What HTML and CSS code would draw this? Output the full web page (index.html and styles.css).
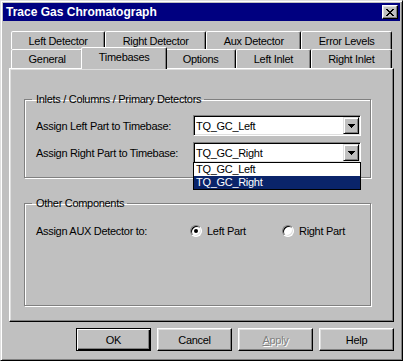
FILE: index.html
```html
<!DOCTYPE html>
<html>
<head>
<meta charset="utf-8">
<link rel="stylesheet" href="styles.css">
</head>
<body>
<div class="window">
  <div class="titlebar">
    <span class="title">Trace Gas Chromatograph</span>
    <span class="close"><svg width="8" height="7" viewBox="0 0 8 7" shape-rendering="crispEdges"><path d="M0 0h2v1h-2z M6 0h2v1h-2z M1 1h2v1h-2z M5 1h2v1h-2z M2 2h4v1h-4z M3 3h2v1h-2z M2 4h4v1h-4z M1 5h2v1h-2z M5 5h2v1h-2z M0 6h2v1h-2z M6 6h2v1h-2z" fill="#000"/></svg></span>
  </div>
  <div class="content">
    <div class="tabs">
      <div class="tabrow back">
        <div class="tab">Left Detector</div>
        <div class="tab">Right Detector</div>
        <div class="tab">Aux Detector</div>
        <div class="tab">Error Levels</div>
      </div>
      <div class="tabrow front">
        <div class="tab">General</div>
        <div class="tab selected">Timebases</div>
        <div class="tab">Options</div>
        <div class="tab">Left Inlet</div>
        <div class="tab">Right Inlet</div>
      </div>
    </div>
    <div class="panel">
      <fieldset class="group group-inlets">
        <legend>Inlets / Columns / Primary Detectors</legend>
        <div class="form-grid">
          <span class="label">Assign Left Part to Timebase:</span>
          <div class="combo">
            <span class="combo-text">TQ_GC_Left</span>
            <span class="combo-btn"><svg width="7" height="4" viewBox="0 0 7 4" shape-rendering="crispEdges"><path d="M0 0h7v1h-7z M1 1h5v1h-5z M2 2h3v1h-3z M3 3h1v1h-1z" fill="#000"/></svg></span>
          </div>
          <span class="label">Assign Right Part to Timebase:</span>
          <div class="combo">
            <span class="combo-text">TQ_GC_Right</span>
            <span class="combo-btn"><svg width="7" height="4" viewBox="0 0 7 4" shape-rendering="crispEdges"><path d="M0 0h7v1h-7z M1 1h5v1h-5z M2 2h3v1h-3z M3 3h1v1h-1z" fill="#000"/></svg></span>
            <ul class="dropdown">
              <li>TQ_GC_Left</li>
              <li class="hilite">TQ_GC_Right</li>
            </ul>
          </div>
        </div>
      </fieldset>
      <fieldset class="group group-other">
        <legend>Other Components</legend>
        <div class="radio-row">
          <span class="label">Assign AUX Detector to:</span>
          <span class="radio-item"><span class="radio checked"></span>Left Part</span>
          <span class="radio-item"><span class="radio"></span>Right Part</span>
        </div>
      </fieldset>
    </div>
    <div class="buttons">
      <span class="btn default">OK</span>
      <span class="btn">Cancel</span>
      <span class="btn disabled"><u>A</u>pply</span>
      <span class="btn">Help</span>
    </div>
  </div>
</div>
</body>
</html>
```

FILE: styles.css
```css
html, body {
  margin: 0;
  padding: 0;
  background: #c0c0c0;
}

.window {
  width: 403px;
  height: 361px;
  box-sizing: border-box;
  border: 1px solid;
  border-color: #dfdfdf #000 #000 #dfdfdf;
  box-shadow: inset 1px 1px #fff, inset -1px -1px #808080;
  padding: 2px;
  background: #c0c0c0;
  display: flex;
  flex-direction: column;
  font-family: "Liberation Sans", Arial, sans-serif;
  font-size: 11px;
  letter-spacing: -0.3px;
  color: #000;
}

.titlebar {
  height: 18px;
  flex: none;
  background: #000080;
  color: #fff;
  font-weight: bold;
  font-size: 12px;
  letter-spacing: 0;
  display: flex;
  align-items: center;
  justify-content: space-between;
  padding: 0 2px 0 3px;
}

.title {
  line-height: 18px;
  white-space: nowrap;
}

.close {
  width: 16px;
  height: 14px;
  box-sizing: border-box;
  border: 1px solid;
  border-color: #fff #000 #000 #fff;
  box-shadow: inset -1px -1px #808080, inset 1px 1px #dfdfdf;
  background: #c0c0c0;
  display: flex;
  align-items: center;
  justify-content: center;
}

.close svg {
  display: block;
}

.content {
  flex: 1;
  display: flex;
  flex-direction: column;
  padding: 10px 6px 0 6px;
}

.tabs {
  padding: 0 2px;
}

.tabrow {
  display: flex;
  align-items: flex-end;
}

.tabrow.back {
  height: 18px;
}

.tabrow.front {
  height: 19px;
}

.tab {
  flex: 1 1 auto;
  height: 100%;
  box-sizing: border-box;
  border: 1px solid;
  border-bottom: none;
  border-color: #fff #000 transparent #fff;
  border-radius: 2px 2px 0 0;
  box-shadow: inset -1px 0 #808080;
  background: #c0c0c0;
  display: flex;
  align-items: center;
  justify-content: center;
  white-space: nowrap;
}

.tab.selected {
  height: 22px;
  margin: 0 -2px -1px;
  padding-bottom: 3px;
  position: relative;
  z-index: 1;
}

.panel {
  height: 254px;
  box-sizing: border-box;
  border: 1px solid;
  border-color: #fff #000 #000 #fff;
  box-shadow: inset -1px -1px #808080, inset 1px 1px #dfdfdf;
  display: flex;
  flex-direction: column;
  padding: 24px 22px 15px 14px;
}

.group {
  margin: 0;
  border: 1px solid #808080;
  box-shadow: inset 1px 1px #fff, 1px 1px #fff;
  min-width: 0;
  padding: 9px 0 14px 11px;
}

.group legend {
  line-height: 13px;
  padding: 0 3px 0 4px;
  margin-left: -4px;
}

.group-other {
  flex: 1;
  margin-top: 19px;
  padding-top: 14px;
}

.form-grid {
  display: grid;
  grid-template-columns: 157px 168px;
  grid-auto-rows: 21px;
  row-gap: 6px;
  align-items: center;
}

.label {
  white-space: nowrap;
}

.combo {
  position: relative;
  height: 21px;
  box-sizing: border-box;
  border: 1px solid;
  border-color: #808080 #fff #fff #808080;
  box-shadow: inset 1px 1px #000, inset -1px -1px #dfdfdf;
  background: #fff;
  display: flex;
  align-items: center;
  padding: 1px 1px 1px 2px;
}

.combo-text {
  flex: 1;
  white-space: nowrap;
}

.combo-btn {
  width: 16px;
  height: 17px;
  box-sizing: border-box;
  border: 1px solid;
  border-color: #dfdfdf #000 #000 #dfdfdf;
  box-shadow: inset 1px 1px #fff, inset -1px -1px #808080;
  background: #c0c0c0;
  display: flex;
  align-items: center;
  justify-content: center;
}

.combo-btn svg {
  display: block;
}

.dropdown {
  position: absolute;
  top: 100%;
  left: -1px;
  width: 168px;
  box-sizing: border-box;
  margin: 0;
  padding: 0;
  list-style: none;
  border: 1px solid #000;
  background: #fff;
  z-index: 2;
}

.dropdown li {
  height: 13px;
  line-height: 13px;
  padding-left: 2px;
  white-space: nowrap;
}

.dropdown li.hilite {
  background: #0a246a;
  color: #fff;
}

.radio-row {
  display: grid;
  grid-template-columns: 154px 92px auto;
  height: 13px;
  align-items: center;
}

.radio-item {
  display: flex;
  align-items: center;
  gap: 5px;
  white-space: nowrap;
}

.radio {
  width: 12px;
  height: 12px;
  box-sizing: border-box;
  border-radius: 50%;
  border: 1px solid;
  border-color: #808080 #fff #fff #808080;
  box-shadow: inset 1px 1px #000, inset -1px -1px #dfdfdf;
  background: #fff;
  position: relative;
}

.radio.checked::after {
  content: "";
  position: absolute;
  left: 3px;
  top: 3px;
  width: 4px;
  height: 4px;
  border-radius: 50%;
  background: #000;
}

.buttons {
  display: flex;
  justify-content: flex-end;
  gap: 6px;
  margin-top: 6px;
}

.btn {
  width: 75px;
  height: 23px;
  box-sizing: border-box;
  border: 1px solid;
  border-color: #fff #000 #000 #fff;
  box-shadow: inset -1px -1px #808080, inset 1px 1px #dfdfdf;
  display: flex;
  align-items: center;
  justify-content: center;
}

.btn.default {
  border-color: #000;
  box-shadow: inset 1px 1px #fff, inset -1px -1px #000, inset -2px -2px #808080;
}

.btn.disabled {
  color: #808080;
  text-shadow: 1px 1px 0 #fff;
}
```
